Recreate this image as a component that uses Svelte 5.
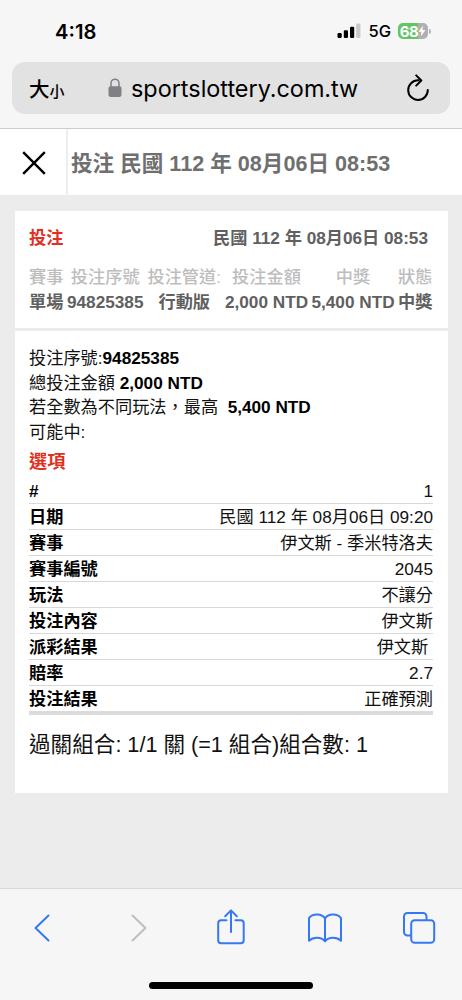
<script lang="ts">
    const summary = [
        { label: "賽事", value: "單場" },
        { label: "投注序號", value: "94825385" },
        { label: "投注管道:", value: "行動版" },
        { label: "投注金額", value: "2,000 NTD" },
        { label: "中獎", value: "5,400 NTD" },
        { label: "狀態", value: "中獎" },
    ];

    const rows = [
        { label: "#", value: "1" },
        { label: "日期", value: "民國 112 年 08月06日 09:20" },
        { label: "賽事", value: "伊文斯 - 季米特洛夫" },
        { label: "賽事編號", value: "2045" },
        { label: "玩法", value: "不讓分" },
        { label: "投注內容", value: "伊文斯" },
        { label: "派彩結果", value: "伊文斯\u00a0" },
        { label: "賠率", value: "2.7" },
        { label: "投注結果", value: "正確預測" },
    ];
</script>

<div class="screen" lang="zh-TW">
    <div class="browser-top">
        <div class="status-bar">
            <span class="time">4:18</span>
            <div class="status-right">
                <svg class="signal" width="24" height="16" viewBox="0 0 24 16">
                    <rect x="0.5" y="10" width="4.2" height="5" rx="1.2" />
                    <rect x="6.8" y="7.3" width="4.2" height="7.7" rx="1.2" />
                    <rect x="13" y="3.8" width="4.2" height="11.2" rx="1.2" />
                    <rect class="off" x="19.2" y="0.5" width="4.2" height="14.5" rx="1.2" />
                </svg>
                <span class="network">5G</span>
                <div class="battery">
                    <span>68</span>
                    <svg width="8" height="12" viewBox="0 0 8 12">
                        <path d="M5.1 0.5 0.5 6.8h3L2.7 11.5 7.5 5.1H4.4z" fill="#fff" />
                    </svg>
                </div>
                <span class="battery-cap"></span>
            </div>
        </div>
        <div class="address">
            <span class="text-size">大<small>小</small></span>
            <svg class="lock" width="14" height="20" viewBox="0 0 14 20">
                <path d="M3 9V5.2a4 4 0 0 1 8 0V9" fill="none" stroke="#808085" stroke-width="1.5" />
                <rect x="0.5" y="8.3" width="13" height="10.6" rx="1.8" fill="#808085" />
            </svg>
            <span class="domain">sportslottery.com.tw</span>
            <svg class="reload" width="24" height="28" viewBox="0 0 24 28">
                <path d="M12.8 6.3H12A9.8 9.8 0 1 0 21.8 16" />
                <path d="M10.2 1.4 15.3 6.5 10.2 11.6" />
            </svg>
        </div>
    </div>

    <header class="page-header">
        <button class="close" aria-label="關閉">
            <svg width="24" height="24" viewBox="0 0 24 24">
                <path d="M1.2 1.2 22.8 22.8M22.8 1.2 1.2 22.8" />
            </svg>
        </button>
        <h1>投注 民國 112 年 08月06日 08:53</h1>
    </header>

    <main>
        <section class="card overview">
            <div class="overview-head">
                <strong class="red">投注</strong>
                <strong>民國 112 年 08月06日 08:53</strong>
            </div>
            <div class="summary">
                {#each summary as item}
                    <span class="label">{item.label}</span>
                {/each}
                {#each summary as item}
                    <span class="value">{item.value}</span>
                {/each}
            </div>
        </section>

        <section class="card details">
            <div class="lines">
                <p>投注序號:<b>94825385</b></p>
                <p>總投注金額 <b>2,000 NTD</b></p>
                <p>若全數為不同玩法，最高&nbsp; <b>5,400 NTD</b></p>
                <p>可能中:</p>
            </div>
            <h2>選項</h2>
            <div class="rows">
                {#each rows as row}
                    <div class="row">
                        <b>{row.label}</b>
                        <span>{row.value}</span>
                    </div>
                {/each}
            </div>
            <p class="combo">過關組合: 1/1 關 (=1 組合)組合數: 1</p>
        </section>
    </main>

    <footer class="toolbar">
        <nav>
            <svg width="36" height="40" viewBox="0 0 36 40">
                <path d="M23.5 7.5 10.5 20 23.5 32.5" />
            </svg>
            <svg class="disabled" width="36" height="40" viewBox="0 0 36 40">
                <path d="M13.500 7.5 26.500 20 13.500 32.5" />
            </svg>
            <svg width="36" height="40" viewBox="0 0 36 40">
                <path d="M13.5 12.2H8.2a3 3 0 0 0-3 3v17a3 3 0 0 0 3 3h19.5a3 3 0 0 0 3-3v-17a3 3 0 0 0-3-3h-5.3" />
                <path d="M18 24V2.8M12.2 8.3 18 2.4 23.8 8.3" />
            </svg>
            <svg width="36" height="40" viewBox="0 0 36 40">
                <path d="M18 10.5C15 5.3 5.5 5.3 2 10.2V32.8C6.5 28.8 14 28.8 18 33.3C22 28.8 29.5 28.8 34 32.8V10.2C30.5 5.3 21 5.3 18 10.5V33" />
            </svg>
            <svg width="36" height="40" viewBox="0 0 36 40">
                <path d="M8.5 27.5H5.500a3.500 3.500 0 0 1-3.500-3.500V8.500A3.500 3.500 0 0 1 5.500 5H21a3.500 3.500 0 0 1 3.500 3.500V11.500" />
                <rect x="9.2" y="12.2" width="23" height="22.500" rx="3.500" />
            </svg>
        </nav>
        <div class="home-indicator"></div>
    </footer>
</div>

<style>
    :global(body) {
        margin: 0;
    }
    .screen {
        width: 462px;
        height: 1000px;
        display: flex;
        flex-direction: column;
        overflow: hidden;
        background: #ececec;
        color: #111;
        font-family: "Liberation Sans", "Noto Sans CJK TC", sans-serif;
        font-size: 17.2px;
    }
    p,
    h1,
    h2 {
        margin: 0;
    }
    .browser-top {
        box-sizing: border-box;
        height: 129px;
        padding: 0 12px;
        background: #f6f6f6;
        border-bottom: 1px solid #cdcdcd;
        font-family: Inter, "Noto Sans CJK TC", sans-serif;
        color: #000;
    }
    .status-bar {
        height: 62px;
        display: flex;
        justify-content: space-between;
        align-items: center;
        padding: 0 19px 0 43px;
        box-sizing: border-box;
    }
    .time {
        font-size: 20.2px;
        font-weight: 600;
    }
    .status-right {
        display: flex;
        align-items: center;
    }
    .signal .off {
        fill: #c9c9c9;
    }
    .network {
        margin: 0 7px;
        font-size: 16.5px;
        font-weight: 500;
    }
    .battery {
        display: flex;
        align-items: center;
        justify-content: center;
        width: 30px;
        height: 16.5px;
        border-radius: 5px;
        background: linear-gradient(90deg, #65c466 68%, #b0b0b0 68%);
        color: #fff;
        font-size: 15px;
        font-weight: 700;
        letter-spacing: -0.5px;
    }
    .battery-cap {
        width: 2px;
        height: 5px;
        margin-left: 1px;
        border-radius: 0 2px 2px 0;
        background: #b5b5b5;
    }
    .address {
        box-sizing: border-box;
        height: 52px;
        display: flex;
        align-items: center;
        padding: 0 20px 0 17px;
        border-radius: 13px;
        background: #e2e2e2;
    }
    .text-size {
        width: 79px;
        font-size: 20.5px;
        font-weight: 500;
        white-space: nowrap;
    }
    .text-size small {
        font-size: 15px;
    }
    .lock {
        margin-right: 9px;
    }
    .domain {
        flex: 1;
        font-size: 23.4px;
    }
    .reload path {
        fill: none;
        stroke: #000;
        stroke-width: 2;
        stroke-linecap: round;
        stroke-linejoin: round;
    }
    .page-header {
        height: 66px;
        display: flex;
        align-items: center;
        background: #fff;
    }
    .close {
        box-sizing: border-box;
        width: 68px;
        height: 66px;
        padding: 0 0 0 1px;
        border: 0;
        border-right: 2px solid #eee;
        background: none;
    }
    .close svg {
        display: block;
        margin: 2px auto 0;
    }
    .close path {
        stroke: #000;
        stroke-width: 2.4;
    }
    h1 {
        padding: 0 0 2px 3px;
        font-size: 21.6px;
        font-weight: 700;
        color: #6f6f6f;
        white-space: nowrap;
    }
    main {
        flex: 1;
        padding: 16px 14.5px 0;
    }
    .card {
        box-sizing: border-box;
        padding: 0 14.5px;
        background: #fff;
    }
    .overview {
        height: 117px;
        margin-bottom: 3px;
        padding-top: 14px;
        color: #606060;
    }
    .overview-head {
        display: flex;
        justify-content: space-between;
        height: 40px;
        padding-right: 5px;
        line-height: 26px;
    }
    .red,
    h2 {
        color: #e03022;
    }
    .summary {
        display: grid;
        grid-template-columns: 34.5px 76.5px 74.5px 83px 83px 34.5px;
        column-gap: 3.5px;
        justify-items: center;
        line-height: 24.5px;
        white-space: nowrap;
    }
    .label {
        color: #bdbdbd;
        font-weight: 500;
    }
    .value {
        font-weight: 700;
    }
    .details {
        height: 462px;
        padding-top: 15px;
    }
    .lines {
        line-height: 24.6px;
    }
    .lines b {
        color: #000;
    }
    h2 {
        height: 34px;
        font-size: 18.2px;
        line-height: 36px;
    }
    .rows {
        border-bottom: 4px solid #dcdcdc;
    }
    .row {
        box-sizing: border-box;
        height: 26px;
        display: flex;
        justify-content: space-between;
        border-bottom: 1px solid #d8d8d8;
        line-height: 26px;
    }
    .row b {
        color: #000;
    }
    .row:last-child {
        height: 25px;
        border-bottom: 0;
    }
    .combo {
        padding-top: 12px;
        font-size: 21.6px;
        line-height: 36px;
        white-space: nowrap;
    }
    .toolbar {
        box-sizing: border-box;
        height: 112px;
        display: flex;
        flex-direction: column;
        align-items: center;
        justify-content: space-between;
        padding: 19px 0 11px;
        border-top: 1px solid #d9d9d9;
        background: #f6f6f6;
    }
    nav {
        width: 413px;
        display: flex;
        justify-content: space-between;
    }
    nav svg {
        fill: none;
        stroke: #3478f6;
        stroke-width: 2;
        stroke-linecap: round;
        stroke-linejoin: round;
    }
    nav .disabled {
        stroke: #bfbfbf;
    }
    .home-indicator {
        width: 164px;
        height: 7px;
        border-radius: 4px;
        background: #000;
    }
</style>
